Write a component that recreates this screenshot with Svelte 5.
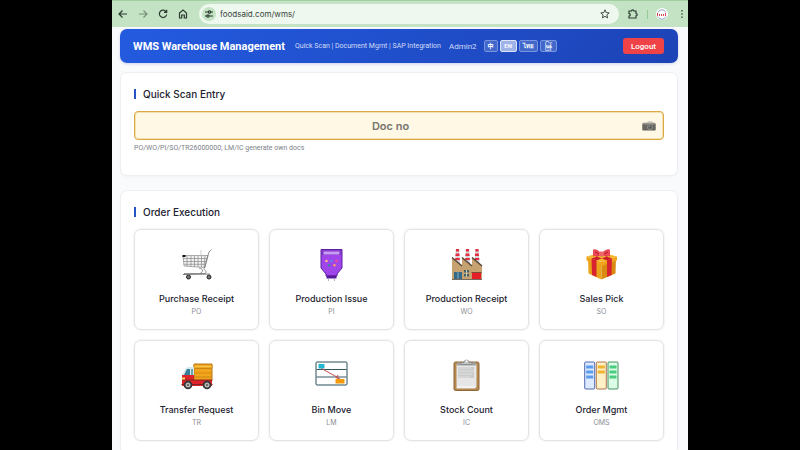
<script>
    const languages = ["中", "EN", "ไทย", "မြန်"];
    const orders = [
        { name: "Purchase Receipt", code: "PO", icon: "cart" },
        { name: "Production Issue", code: "PI", icon: "hopper" },
        { name: "Production Receipt", code: "WO", icon: "factory" },
        { name: "Sales Pick", code: "SO", icon: "gift" },
        { name: "Transfer Request", code: "TR", icon: "truck" },
        { name: "Bin Move", code: "LM", icon: "bins" },
        { name: "Stock Count", code: "IC", icon: "clipboard" },
        { name: "Order Mgmt", code: "OMS", icon: "binders" },
    ];

    let language = "EN";
    let docNo = "";
    let address = "foodsaid.com/wms/";
</script>

<div class="browser">
    <div class="toolbar">
        <button class="tool" aria-label="Back">
            <svg viewBox="0 0 12 12"><path d="M10 6H2.500M5.500 2.500 2 6l3.500 3.500" /></svg>
        </button>
        <button class="tool dim" aria-label="Forward">
            <svg viewBox="0 0 12 12"><path d="M2 6h7.500M6.500 2.500 10 6 6.500 9.500" /></svg>
        </button>
        <button class="tool" aria-label="Reload">
            <svg viewBox="0 0 12 12"><path d="M9.300 4A3.700 3.700 0 1 0 9.700 6.500M9.700 1.700V4.300H7" /></svg>
        </button>
        <button class="tool" aria-label="Home">
            <svg viewBox="0 0 12 12"><path d="M2.500 5 6 2l3.500 3v5H7.300V7H4.700v3H2.500Z" /></svg>
        </button>
        <div class="address">
            <button class="site" aria-label="Site information">
                <svg viewBox="0 0 12 12"><path d="M2 4h3M6.500 8H10M7.500 4H10M2 8h2" /><circle cx="6.500" cy="4" r="1.200" /><circle cx="5" cy="8" r="1.200" /></svg>
            </button>
            <input type="text" aria-label="Address" bind:value={address} />
            <button class="tool" aria-label="Bookmark">
                <svg viewBox="0 0 12 12"><path class="thin" d="m6 1.800 1.200 2.800 3 .3-2.300 2 .7 3L6 8.300 3.400 9.900l.7-3-2.300-2 3-.3Z" /></svg>
            </button>
        </div>
        <button class="tool" aria-label="Extensions">
            <svg viewBox="0 0 12 12"><path d="M2 3h2.500a1.200 1.200 0 0 1 2.400 0H9v2.500a1.200 1.200 0 0 1 0 2.400V10H2V8a1.300 1.300 0 0 0 0-2.600Z" /></svg>
        </button>
        <span class="divider"></span>
        <button class="profile" aria-label="Profile">
            <svg viewBox="0 0 12 12">
                <circle cx="6" cy="6" r="6" fill="#fff" />
                <path d="M2 4.500a4.300 4.300 0 0 1 8 0" fill="none" stroke="#8da3c8" />
                <path d="M2 8.500a4.300 4.300 0 0 0 8 0" fill="none" stroke="#8da3c8" />
                <path d="M1.500 5v3M3.500 6v2M5.500 6v2M7.500 6v2M9.500 5v3" stroke="#d64552" />
            </svg>
        </button>
        <button class="tool menu" aria-label="Menu">
            <svg viewBox="0 0 12 12"><path d="M6 2v1.500M6 5.300v1.500M6 8.600v1.500" /></svg>
        </button>
    </div>

    <main>
        <header>
            <h1>WMS Warehouse Management</h1>
            <span class="tagline">Quick Scan | Document Mgmt | SAP Integration</span>
            <span class="user">Admin2</span>
            <div class="languages">
                {#each languages as lang}
                    <button class:active={lang === language} on:click={() => (language = lang)}>{lang}</button>
                {/each}
            </div>
            <button class="logout">Logout</button>
        </header>

        <section class="scan">
            <h2>Quick Scan Entry</h2>
            <div class="scan-box">
                <input type="text" aria-label="Doc no" placeholder="Doc no" bind:value={docNo} />
                <button class="camera" aria-label="Scan with camera">
                    <svg viewBox="0 0 14 10">
                        <path d="M1 1.500h4L6 .3h4l1 1.200h2V4H1Z" fill="#c3c1b8" />
                        <rect x=".3" y="2.500" width="13.400" height="7" rx=".8" fill="#66665f" />
                        <path d="M.3 3h13.400" stroke="#99978d" />
                        <circle cx="8" cy="5.900" r="3" fill="#8b8a83" />
                        <circle cx="8" cy="5.900" r="1.900" fill="#56585a" />
                        <circle cx="7.500" cy="5.400" r=".7" fill="#a4a9aa" />
                    </svg>
                </button>
            </div>
            <p class="hint">PO/WO/PI/SO/TR26000000; LM/IC generate own docs</p>
        </section>

        <section>
            <h2>Order Execution</h2>
            <div class="cards">
                {#each orders as order}
                    <button class="card">
                        <svg class="icon" viewBox="0 0 36 36">
                            {#if order.icon === "cart"}
                                <g fill="none" stroke="#8a8a8a" stroke-width=".7">
                                    <path d="M4 9.500h25l-3 12L5 20Z" fill="#f1f1f1" />
                                    <path d="M4 12.500h24M4.500 15.500h23M5 18.300h21M8 10v10.500M12 10v10.500M15.500 10v11M19 10v11M22.500 10v11M26 10l-1 11" />
                                    <path d="M22 9.500V4" stroke="#bbb" />
                                    <path d="M32.500 3.500 30 6 25.500 21.500c-2 2 3 3 1 6H5M20 22c6 1 3 5 1 5.500" stroke="#666" />
                                </g>
                                <path d="M3.500 9h3v2h-3Z" fill="#111" />
                                <g fill="#777" stroke="#222">
                                    <circle cx="9.500" cy="31" r="2" /><circle cx="30" cy="31" r="2" />
                                </g>
                                <path d="M4 28.500 31 28" stroke="#777" />
                            {:else if order.icon === "hopper"}
                                <path d="M7 3.500h21V22l-5 6v2H12v-2l-5-6Z" fill="#9f45ea" stroke="#5b219f" />
                                <path d="M8 4.500h19V9H8Z" fill="#7936bd" />
                                <path d="M9.500 5.500h16v3h-16Z" fill="#ca9cf4" />
                                <path d="M12.500 29.500h10v3h-10Z" fill="#551a9a" />
                                <path d="M14.500 32.500V35M20.500 32.500V35" stroke="#b7b0c2" />
                                <circle cx="12.500" cy="15" r="1.300" fill="#ffb18f" />
                                <circle cx="17.500" cy="15" r="1.200" fill="#4c8df0" />
                                <circle cx="22.500" cy="15" r="1.300" fill="#ef4c9c" />
                                <circle cx="15" cy="19.300" r="1.200" fill="#318c9c" />
                                <circle cx="20.500" cy="19.300" r="1.300" fill="#ff956d" />
                            {:else if order.icon === "factory"}
                                {#each [6, 16, 25.5] as x}
                                    <path d="M{x + 1} 3h3l1 15H{x}Z" fill="#d6d0d8" />
                                    <path d="M{x + 1} 3h3l.2 2.500h-3.400ZM{x + 0.6} 7.500h3.800l.2 2.500h-4.200ZM{x + 0.3} 12h4.400l.2 2h-4.800Z" fill="#e32e3b" />
                                {/each}
                                <path d="M3 11.500 13 20v-8.500L23 20v-8.500L33 20v13.500H3Z" fill="#c5a270" />
                                <path d="m3 11.500 10 8.500M13 11.500 23 20M23 11.500 33 20" fill="none" stroke="#55483b" stroke-width="1.500" />
                                <path d="M5 26h8v7.500H5Z" fill="#376a87" />
                                <path d="M9 26v7.500" stroke="#a8c8d6" stroke-width=".7" />
                                <path d="M15 24h5v2.500h-5ZM15 28h5v2.500h-5Z" fill="#41636d" />
                                <path d="M17.500 24v7" stroke="#d7c9ab" />
                                <path d="M23 27h9v6.500h-9Z" fill="#e51f27" />
                                <path d="M22.500 26.500h10" stroke="#7e4937" />
                                <path d="M3 33.500h30" stroke="#776a5e" />
                            {:else if order.icon === "gift"}
                                <path d="m2.500 10.500 15-4 15.500 4-15 5.500Z" fill="#f5b72c" />
                                <path d="m4 12 13.500 5v16.500l-13-6Z" fill="#e9a41a" />
                                <path d="m17.500 17 14.500-5-.5 15.500-14 6Z" fill="#d98a10" />
                                <path d="m2.500 10.500 15 5.500L33 10.500v4L17.500 20l-15-5.500Z" fill="#f0a51d" />
                                <path d="m7.500 12.500 5 2V31L8 29ZM23 14.500l5-2-.5 16.500-4.500 2Z" fill="#d82431" />
                                <path d="m7.500 12.500 14-5 5 1.500-14 5.500ZM28 12.500l-14-5-5 1.500 14 5.500Z" fill="#cb1d2a" />
                                <path d="M17.500 7.500C14 3 9 2 9 4.500v6c4-1 6-1 8.500-1s5 0 8.500 1v-6C26 2 21 3 17.500 7.500Z" fill="#ea4a55" />
                                <path d="m11 6 4 2M24 6l-4 2" stroke="#b71b2c" />
                                <rect x="15" y="5.500" width="5" height="5" rx="1.500" fill="#f0646c" />
                            {:else if order.icon === "truck"}
                                <path d="M15 7h18v17H15Z" fill="#f3a51b" stroke="#b3771c" />
                                <path d="M15 8h18v3H15ZM15 16h18" fill="#ffc742" stroke="#d98912" />
                                <path d="M15 11.500h18M15 20h18" stroke="#c88618" />
                                <path d="M3 24v-6l4-7q1-1 3-1h5v14Z" fill="#d3e9eb" />
                                <path d="m5 18 3-6h3v6Z" fill="#367f9a" /><path d="M12 12h2v7h-2Z" fill="#68a5b1" />
                                <path d="M3 18h12v5h18v6H3Z" fill="#dc2429" />
                                <path d="M3 23h30" stroke="#86261f" /><path d="M2.500 27.500h31" stroke="#7d2525" />
                                <path d="M3 20.500h3v2H3Z" fill="#ffd164" />
                                {#each [9, 28] as x}
                                    <circle cx={x} cy="28" r="4.300" fill="#33363a" />
                                    <circle cx={x} cy="28" r="2.500" fill="#bdb9b4" /><circle cx={x} cy="28" r="1" fill="#555" />
                                {/each}
                            {:else if order.icon === "bins"}
                                <rect x="2" y="5" width="31" height="23" rx="1" fill="#fff" stroke="#294e58" />
                                <path d="M2.500 12.500h30M2.500 20h30" stroke="#355963" />
                                <path d="M4.500 7h6v4.500h-6Z" fill="#20b9cf" /><path d="M21.500 22h9v4.500h-9Z" fill="#f39b0c" />
                                <path d="m7.500 11.500 18 10-3-.5 1.500-3" fill="none" stroke="#bf4c49" />
                            {:else if order.icon === "clipboard"}
                                <rect x="5" y="5" width="25" height="28.500" rx="1.500" fill="#b5884e" stroke="#8f6739" />
                                <path d="M7.500 7.500h20V30l-1.500 1.500H7.500Z" fill="#e5e6e5" />
                                <path d="M9 10h16v11H9Z" fill="#cbcccc" />
                                <path d="M9 11h13M9 14h16M9 17h14M9 20h12" stroke="#dedfdf" />
                                <path d="M8 30h18" stroke="#fff" />
                                <path d="M8 5.500h19v3H8Z" fill="#a0a4a5" />
                                <path d="M12 5.500h3a2.500 2.500 0 0 1 5 0h3v2H12Z" fill="#c1c5c5" stroke="#777" stroke-width=".6" />
                                <circle cx="17.500" cy="4.300" r="1" fill="#fff" />
                            {:else}
                                <g stroke-width=".9">
                                    <rect x=".7" y="5" width="10" height="27" rx="1" fill="#dce9fe" stroke="#405ba8" />
                                    <rect x="12.300" y="5" width="10" height="27" rx="1" fill="#fff0c5" stroke="#a3683b" />
                                    <rect x="24" y="5" width="10" height="27" rx="1" fill="#dbfce7" stroke="#37864f" />
                                </g>
                                <path d="M2.200 10h7M2.200 15h7M2.200 20h7" stroke="#5a9ceb" stroke-width="3" />
                                <path d="M13.800 10h7M13.800 15h7" stroke="#f1b42d" stroke-width="3" />
                                <path d="M25.500 10h7M25.500 15h7M25.500 20h7" stroke="#4acb7e" stroke-width="3" />
                            {/if}
                        </svg>
                        <span class="name">{order.name}</span>
                        <span class="code">{order.code}</span>
                    </button>
                {/each}
            </div>
        </section>
    </main>
</div>

<style>
    :global(body) {
        background: #000;
        overflow: hidden;
    }

    .browser {
        width: 72%;
        min-height: 100vh;
        margin: 0 auto;
        background: #f9fafc;
        font-family: Inter, "Liberation Sans", "Noto Sans CJK SC", sans-serif;
        color: #1c2230;
    }

    button {
        padding: 0;
        border: none;
        background: none;
        color: inherit;
        font-family: inherit;
        cursor: pointer;
    }

    svg {
        display: block;
    }

    .toolbar {
        display: flex;
        align-items: center;
        gap: 8px;
        height: 27px;
        box-sizing: border-box;
        padding: 0 0 0 5px;
        border-top: 1px solid #9fce9f;
        background: #c4e3c5;
    }

    .tool {
        flex: none;
        width: 12px;
        height: 12px;
    }

    .tool svg,
    .site svg {
        fill: none;
        stroke: #2d3b31;
        stroke-width: 1.2;
    }

    .tool svg .thin {
        stroke-width: 0.9;
    }

    .dim {
        opacity: 0.5;
    }

    .address {
        flex: 1;
        display: flex;
        align-items: center;
        height: 20px;
        min-width: 0;
        margin: 0 0 0 2px;
        padding: 0 8px 0 3px;
        border-radius: 10px;
        background: #eff8ef;
    }

    .address input {
        flex: 1;
        min-width: 0;
        padding: 0 4px;
        border: none;
        outline: none;
        background: none;
        color: #38433b;
        font-family: Inter, sans-serif;
        font-size: 8px;
    }

    .site {
        flex: none;
        width: 14px;
        height: 14px;
        padding: 1px;
        border-radius: 50%;
        background: #c4e3c5;
    }

    .divider {
        width: 1px;
        height: 9px;
        background: #91ca93;
    }

    .profile {
        flex: none;
        width: 12px;
        height: 12px;
    }

    main {
        padding: 2px 10px 0 8px;
    }

    header {
        display: flex;
        align-items: center;
        height: 34px;
        box-sizing: border-box;
        padding: 0 14px 0 13px;
        border-radius: 7px;
        background: linear-gradient(135deg, #235be0, #1d43b6);
        box-shadow: 0 1px 3px #1e40af33;
        color: #fff;
        font-family: Roboto, "Noto Sans CJK SC", sans-serif;
        white-space: nowrap;
    }

    h1 {
        margin: 0 10px 0 0;
        font-size: 11px;
        font-weight: 700;
    }

    .tagline {
        margin-right: 8px;
        color: #d1dcf8;
        font-size: 7px;
    }

    .user {
        margin-right: 7px;
        color: #d1dcf8;
        font-size: 8px;
    }

    .languages {
        display: flex;
        gap: 2px;
    }

    .languages button {
        height: 12px;
        min-width: 14px;
        padding: 0 3px;
        overflow: hidden;
        border: 1px solid #7995df;
        border-radius: 2px;
        background: #4368cb;
        font-size: 6px;
        font-weight: 600;
        line-height: 10px;
    }

    .languages button:not(:first-child) {
        min-width: 17px;
    }

    .languages .active {
        border-color: #dce4fa;
        background: #9fb3e9;
    }

    .logout {
        height: 16px;
        margin-left: auto;
        padding: 0 8px;
        border-radius: 3px;
        background: #ef4347;
        font-size: 8px;
        font-weight: 500;
    }

    section {
        margin-top: 14px;
        padding: 13px;
        border: 1px solid #eeeff2;
        border-radius: 7px;
        background: #fff;
        box-shadow: 0 1px 2px #00000008;
    }

    .scan {
        margin-top: 9px;
        padding-bottom: 21px;
    }

    h2 {
        display: flex;
        align-items: center;
        gap: 7px;
        margin: 0 0 9px;
        font-size: 10px;
        font-weight: 500;
        line-height: 16px;
    }

    h2::before {
        content: "";
        width: 2px;
        height: 10px;
        background: #2454c6;
    }

    .scan-box {
        display: flex;
        align-items: center;
        height: 29px;
        box-sizing: border-box;
        padding: 0 7px 0 4px;
        border: 1px solid #dca843;
        border-radius: 4px;
        background: #fef8e5;
        box-shadow: inset 0 0 0 1px #e8bd6266;
    }

    .scan-box input {
        flex: 1;
        min-width: 0;
        border: none;
        outline: none;
        background: none;
        font-family: inherit;
        font-size: 11px;
        font-weight: 600;
        text-align: center;
    }

    .scan-box input::placeholder {
        color: #77756f;
    }

    .camera {
        width: 14px;
    }

    .hint {
        margin: 2px 0 0;
        color: #7d8188;
        font-family: Roboto, sans-serif;
        font-size: 7px;
        line-height: 12px;
    }

    .cards {
        display: grid;
        grid-template-columns: repeat(4, 1fr);
        gap: 10px;
    }

    .card {
        display: flex;
        flex-direction: column;
        align-items: center;
        padding: 16px 4px 11px;
        border: 1px solid #e3e4e6;
        border-radius: 7px;
        background: #fff;
        box-shadow: 0 0 1px 1px #0000000a;
    }

    .icon {
        width: 36px;
        height: 36px;
        margin-bottom: 10px;
    }

    .name {
        font-size: 9px;
        font-weight: 500;
        line-height: 14px;
    }

    .code {
        color: #8b8e94;
        font-size: 7px;
        line-height: 12px;
    }
</style>
